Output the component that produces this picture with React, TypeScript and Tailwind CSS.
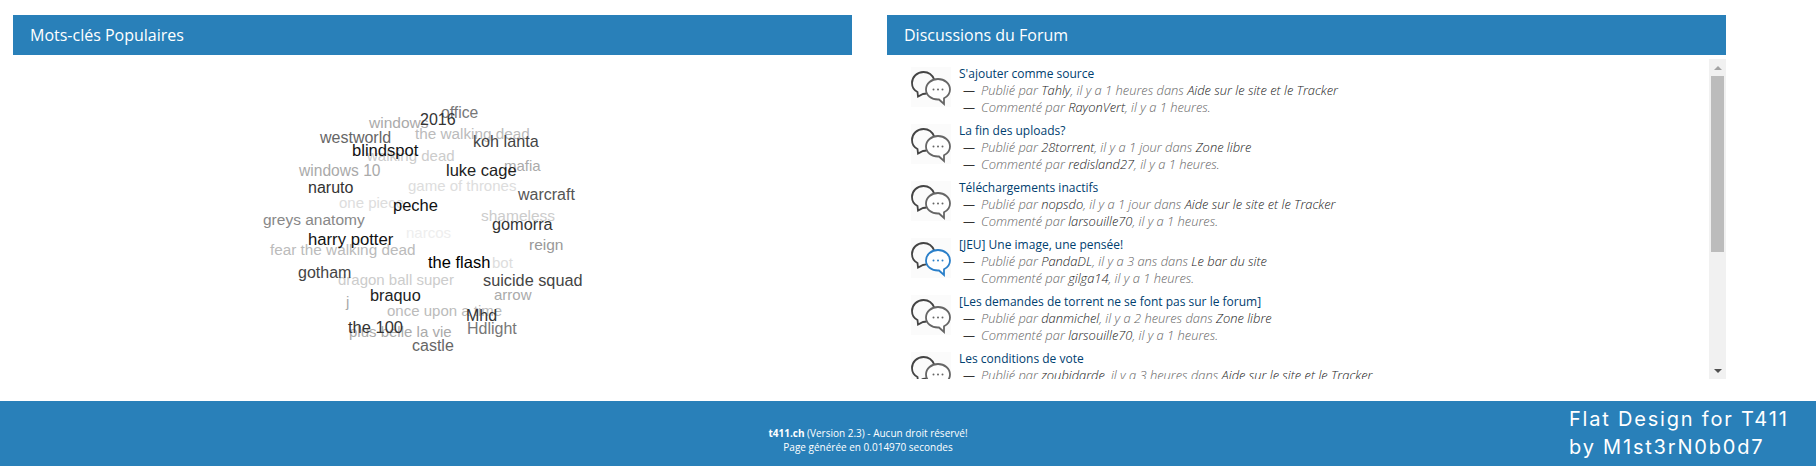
const words = [
  { t: "plus belle la vie", x: 336, y: 277, s: 15, c: "#aaaaaa" },
  { t: "windows", x: 356, y: 69, s: 15.5, c: "#aaaaaa" },
  { t: "the walking dead", x: 402, y: 80, s: 15.3, c: "#bbbbbb" },
  { t: "walking dead", x: 354, y: 101, s: 15, c: "#cccccc" },
  { t: "windows 10", x: 286, y: 117, s: 15.6, c: "#aaaaaa" },
  { t: "mafia", x: 491, y: 111, s: 15, c: "#aaaaaa" },
  { t: "game of thrones", x: 395, y: 131, s: 15, c: "#dddddd" },
  { t: "one piece", x: 326, y: 148, s: 15, c: "#dddddd" },
  { t: "shameless", x: 468, y: 162, s: 15.5, c: "#cccccc" },
  { t: "greys anatomy", x: 250, y: 166, s: 15.5, c: "#888888" },
  { t: "narcos", x: 393, y: 178, s: 15, c: "#eeeeee" },
  { t: "fear the walking dead", x: 257, y: 196, s: 15.3, c: "#bbbbbb" },
  { t: "reign", x: 516, y: 191, s: 15.5, c: "#999999" },
  { t: "bot", x: 479, y: 208, s: 15, c: "#dddddd" },
  { t: "dragon ball super", x: 325, y: 225, s: 15, c: "#cccccc" },
  { t: "arrow", x: 481, y: 240, s: 15, c: "#aaaaaa" },
  { t: "j", x: 333, y: 247, s: 15, c: "#aaaaaa" },
  { t: "once upon a time", x: 374, y: 256, s: 15, c: "#bbbbbb" },
  { t: "office", x: 428, y: 59, s: 15.7, c: "#777777" },
  { t: "2016", x: 407, y: 66, s: 16, c: "#333333" },
  { t: "koh lanta", x: 460, y: 87, s: 16.2, c: "#444444" },
  { t: "westworld", x: 307, y: 84, s: 16, c: "#666666" },
  { t: "blindspot", x: 339, y: 97, s: 16.6, c: "#111111" },
  { t: "luke cage", x: 433, y: 116, s: 16.5, c: "#222222" },
  { t: "naruto", x: 295, y: 134, s: 16, c: "#333333" },
  { t: "warcraft", x: 505, y: 141, s: 16, c: "#555555" },
  { t: "peche", x: 380, y: 151, s: 16.5, c: "#111111" },
  { t: "gomorra", x: 479, y: 170, s: 16.3, c: "#333333" },
  { t: "harry potter", x: 295, y: 186, s: 16.7, c: "#111111" },
  { t: "the flash", x: 415, y: 208, s: 16.5, c: "#000000" },
  { t: "gotham", x: 285, y: 219, s: 16, c: "#444444" },
  { t: "suicide squad", x: 470, y: 226, s: 16.3, c: "#444444" },
  { t: "braquo", x: 357, y: 241, s: 16.3, c: "#222222" },
  { t: "Mhd", x: 453, y: 262, s: 16, c: "#333333" },
  { t: "Hdlight", x: 454, y: 275, s: 16, c: "#777777" },
  { t: "the 100", x: 335, y: 273, s: 16.5, c: "#333333" },
  { t: "castle", x: 399, y: 292, s: 16, c: "#666666" },
];

const topics = [
  { title: "S'ajouter comme source", by: "Tahly", ago: "1 heures", zone: "Aide sur le site et le Tracker", last: "RayonVert", lastAgo: "1 heures" },
  { title: "La fin des uploads?", by: "28torrent", ago: "1 jour", zone: "Zone libre", last: "redisland27", lastAgo: "1 heures" },
  { title: "Téléchargements inactifs", by: "nopsdo", ago: "1 jour", zone: "Aide sur le site et le Tracker", last: "larsouille70", lastAgo: "1 heures" },
  { title: "[JEU] Une image, une pensée!", by: "PandaDL", ago: "3 ans", zone: "Le bar du site", last: "gilga14", lastAgo: "1 heures", active: true },
  { title: "[Les demandes de torrent ne se font pas sur le forum]", by: "danmichel", ago: "2 heures", zone: "Zone libre", last: "larsouille70", lastAgo: "1 heures" },
  { title: "Les conditions de vote", by: "zoubidarde", ago: "3 heures", zone: "Aide sur le site et le Tracker", last: "larsouille70", lastAgo: "1 heures" },
];

function BubblesIcon({ active }: { active?: boolean }) {
  const color = active ? "#2a7fc9" : "#666666";
  return (
    <div className="w-10 h-10 shrink-0 mt-[2px] bg-[#fbfbfb]">
      <svg viewBox="0 0 40 40" width="40" height="40" fill="none" strokeWidth="1.8">
        <path
          d="M12.5 5C6 5 1 10 1 16C1 20 3.2 23.3 6.5 25L7 29.5L12 27C17 27 21.5 25 23.5 13C21.5 8 17.5 5 12.5 5Z"
          stroke="#444444"
        />
        <path
          d="M27 12C20.5 12 15 16.5 15 22.5C15 28.5 20.5 32.5 27 32.5L28 32.5L33 37L33 31.2C36.5 29.5 39 26.5 39 22.5C39 16.5 33.5 12 27 12Z"
          stroke={color}
          fill="#ffffff"
        />
        <circle cx="22.5" cy="22.5" r="1" fill={color} />
        <circle cx="27" cy="22.5" r="1" fill={color} />
        <circle cx="31.5" cy="22.5" r="1" fill={color} />
      </svg>
    </div>
  );
}

function PanelHeader({ title }: { title: string }) {
  return (
    <div className="h-10 bg-[#2980b9] flex items-center pl-[17px] text-white text-base font-medium">
      {title}
    </div>
  );
}

function Topic({ topic }: { topic: (typeof topics)[number] }) {
  return (
    <div className="flex gap-[8px] h-[57px]">
      <BubblesIcon active={topic.active} />
      <div className="flex flex-col">
        <div className="h-[17px] leading-[17px] text-xs font-medium text-[#00406f] whitespace-nowrap">
          {topic.title}
        </div>
        <div className="h-[17px] leading-[17px] text-[12.9px] italic font-light text-[#666666] ml-1 whitespace-nowrap">
          <span className="not-italic text-xs font-normal text-[#333333] mr-[6px]">—</span>
          Publié par <span className="text-[#222222]">{topic.by}</span>, il y a {topic.ago} dans{" "}
          <span className="text-[#222222]">{topic.zone}</span>
        </div>
        <div className="h-[17px] leading-[17px] text-[12.9px] italic font-light text-[#666666] ml-1 whitespace-nowrap">
          <span className="not-italic text-xs font-normal text-[#333333] mr-[6px]">—</span>
          Commenté par <span className="text-[#222222]">{topic.last}</span>, il y a {topic.lastAgo}.
        </div>
      </div>
    </div>
  );
}

export default function App() {
  return (
    <div className="w-[1816px] h-[466px] flex flex-col bg-white font-['Open_Sans',sans-serif] overflow-hidden">
      <div className="h-[401px] flex gap-[35px] pl-[13px] pt-[15px]">
        <div className="w-[839px]">
          <PanelHeader title="Mots-clés Populaires" />
          <div className="relative h-[326px] font-['Liberation_Sans',sans-serif]">
            {words.map((w) => (
              <span
                key={w.t}
                className="absolute leading-none whitespace-nowrap"
                style={{ left: w.x, top: w.y - w.s / 2 - 1, fontSize: w.s, color: w.c }}
              >
                {w.t}
              </span>
            ))}
          </div>
        </div>
        <div className="w-[839px]">
          <PanelHeader title="Discussions du Forum" />
          <div className="mt-1 h-[320px] flex">
            <div className="flex-1 h-full overflow-hidden pl-[24px] pt-[6px]">
              {topics.map((t) => (
                <Topic key={t.title} topic={t} />
              ))}
            </div>
            <div className="w-[17px] h-full bg-[#f1f1f1] flex flex-col items-center">
              <div className="h-[17px] flex items-center justify-center">
                <div className="w-0 h-0 border-x-[4px] border-x-transparent border-b-[4px] border-b-[#a3a3a3]" />
              </div>
              <div className="w-[13px] h-[176px] bg-[#bcbcbc]" />
              <div className="flex-1" />
              <div className="h-[17px] flex items-center justify-center">
                <div className="w-0 h-0 border-x-[4px] border-x-transparent border-t-[4px] border-t-[#505050]" />
              </div>
            </div>
          </div>
        </div>
      </div>
      <div className="relative flex-1 bg-[#2980b9] text-white text-[10px] leading-[14px] text-center pt-[25px] pr-[80px]">
        <div>
          <span className="font-bold">t411.ch</span> (Version 2.3) - Aucun droit réservé!
        </div>
        <div>Page générée en 0.014970 secondes</div>
        <div className="absolute left-[1569px] top-[4px] text-left text-[20px] leading-[28px] font-normal tracking-[1.8px] font-['Inter',sans-serif] whitespace-nowrap">
          <div>Flat Design for T411</div>
          <div>by M1st3rN0b0d7</div>
        </div>
      </div>
    </div>
  );
}
